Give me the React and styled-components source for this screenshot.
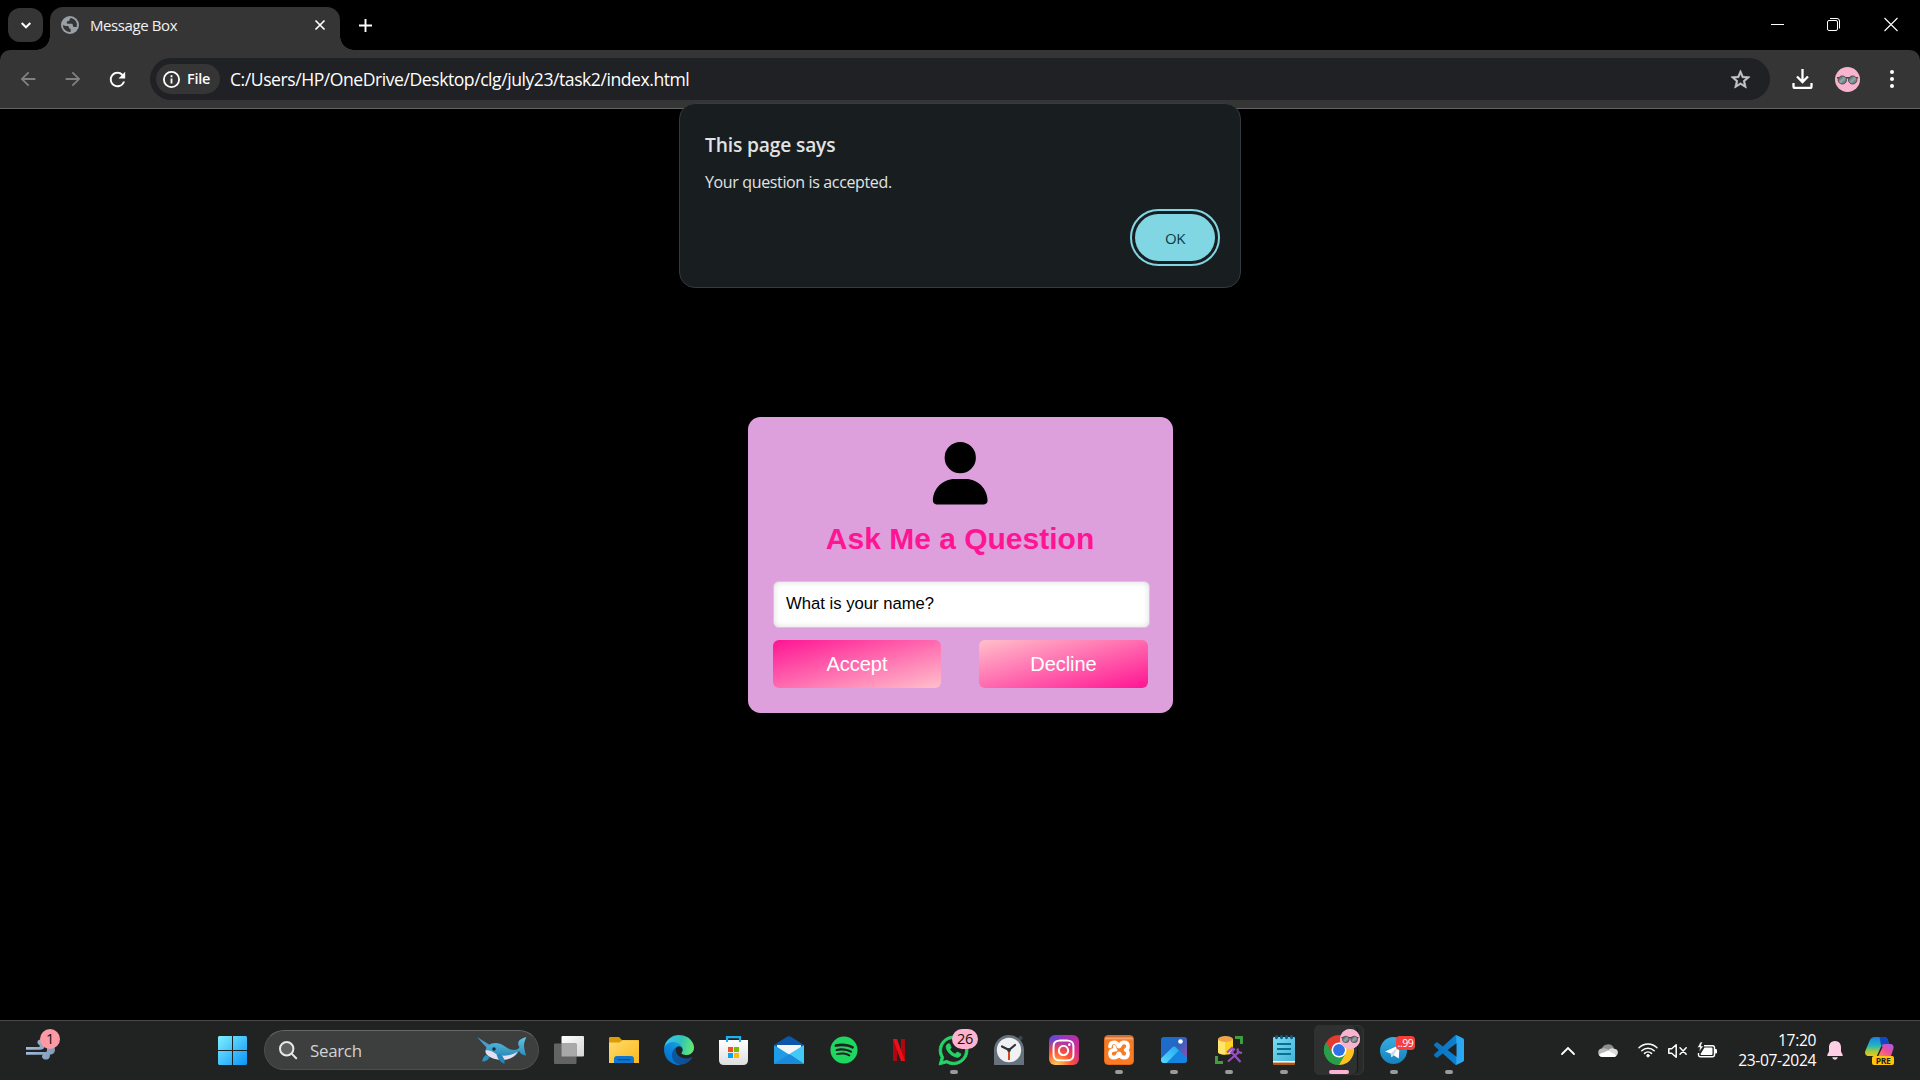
import React from "react";
import styled, { createGlobalStyle, css } from "styled-components";
import { FaSpotify, FaWhatsapp, FaInstagram } from "react-icons/fa";
import { FaUser } from "react-icons/fa6";
import { MdArrowBack, MdArrowForward, MdRefresh, MdStarOutline } from "react-icons/md";

const GlobalStyle = createGlobalStyle`
  *, *::before, *::after { box-sizing: border-box; }
  body { margin: 0; background: #000; overflow: hidden; }
  button, input { font: inherit; border: 0; padding: 0; margin: 0; background: none; color: inherit; }
`;

const ui = `"Open Sans", "Noto Sans", sans-serif`;
const arial = `"Liberation Sans", Arial, sans-serif`;

const Desktop = styled.div`
  width: 1920px;
  height: 1080px;
  display: flex;
  flex-direction: column;
  background: #000;
  color: #fff;
  font-family: ${ui};
  position: relative;
`;

const Svg = styled.svg`
  display: block;
  flex: none;
  overflow: visible;
`;

/* ---------- browser chrome ---------- */

const TabStrip = styled.header`
  height: 50px;
  padding-left: 8px;
  display: flex;
  align-items: flex-start;
`;

const TabSearch = styled.button`
  width: 35px;
  height: 34px;
  margin: 8px 7px 0 0;
  border-radius: 12px;
  background: #353535;
  display: grid;
  place-items: center;
`;

const Tab = styled.div`
  width: 290px;
  height: 43px;
  margin-top: 7px;
  padding: 0 11px 7px 11px;
  border-radius: 13px 13px 0 0;
  background: #353535;
  display: flex;
  align-items: center;
  position: relative;
  &::before,
  &::after {
    content: "";
    position: absolute;
    bottom: 0;
    width: 14px;
    height: 14px;
  }
  &::before {
    left: -14px;
    background: radial-gradient(circle at 0 0, transparent 13.5px, #353535 14px);
  }
  &::after {
    right: -14px;
    background: radial-gradient(circle at 100% 0, transparent 13.5px, #353535 14px);
  }
`;

const TabTitle = styled.span`
  flex: 1;
  margin-left: 11px;
  font-size: 15px;
  letter-spacing: -0.4px;
  line-height: 20px;
  color: #f2f2f2;
`;

const NewTab = styled.button`
  width: 36px;
  height: 36px;
  margin: 7px 0 0 7px;
  display: grid;
  place-items: center;
`;

const WindowControls = styled.div`
  margin-left: auto;
  display: flex;
`;

const WindowButton = styled.button`
  width: ${(p) => p.$w}px;
  height: 49px;
  display: grid;
  place-items: center;
`;

const Toolbar = styled.div`
  height: 59px;
  padding: 0 9px 0 5px;
  background: #353535;
  border-bottom: 1px solid #646464;
  border-radius: 10px 10px 0 0;
  display: flex;
  align-items: center;
`;

const NavButton = styled.button`
  width: 45px;
  height: 42px;
  display: grid;
  place-items: center;
  color: ${(p) => (p.$dim ? "#808080" : "#fff")};
`;

const Omnibox = styled.div`
  width: 1620px;
  height: 42px;
  margin-left: 10px;
  padding: 0 18px 0 6px;
  border-radius: 21px;
  background: #202124;
  display: flex;
  align-items: center;
`;

const SchemeChip = styled.div`
  width: 64px;
  height: 30px;
  padding-left: 7px;
  border-radius: 15px;
  background: #353535;
  display: flex;
  align-items: center;
  gap: 7px;
  font-size: 14.4px;
  line-height: 28px;
  font-weight: 600;
  letter-spacing: -0.2px;
`;

const Url = styled.span`
  flex: 1;
  margin-left: 10px;
  font-size: 17.6px;
  letter-spacing: -0.46px;
  line-height: 24px;
  white-space: nowrap;
`;

const ToolbarActions = styled.div`
  margin-left: 22px;
  display: flex;
  align-items: center;
`;

/* ---------- page ---------- */

const Viewport = styled.main`
  flex: 1;
  display: grid;
  place-items: center;
  font-family: ${arial};
`;

const Card = styled.section`
  width: 425px;
  height: 296px;
  margin: 1px 0 0 1px;
  padding: 25px;
  border-radius: 12.5px;
  background: #dda0dd;
  display: flex;
  flex-direction: column;
  color: #000;
`;

const Avatar = styled.div`
  width: 374px;
  height: 62px;
  display: flex;
  justify-content: center;
`;

const Heading = styled.h1`
  width: 374px;
  margin: 17px 0 25px;
  height: 35px;
  font-size: 30px;
  line-height: 35px;
  font-weight: 700;
  text-align: center;
  color: #ff1493;
`;

const Question = styled.input`
  width: 377px;
  height: 47px;
  padding: 0 12px 1px !important;
  border: 1px solid #ccc !important;
  border-radius: 6px;
  background: #fff !important;
  box-shadow: inset 0 0 6px rgba(0, 0, 0, 0.14);
  font-size: 16.67px !important;
  color: #000 !important;
  outline: none;
`;

const Choices = styled.div`
  margin-top: 12px;
  width: 375px;
  display: grid;
  grid-template-columns: 168px 169px;
  justify-content: space-between;
`;

const Choice = styled.button`
  height: 48px;
  border-radius: 6px;
  font-size: 20px;
  letter-spacing: -0.05px;
  color: #fff;
  background: linear-gradient(to bottom right, ${(p) => p.$from}, ${(p) => p.$to});
`;

const Dialog = styled.div`
  position: absolute;
  left: 679px;
  top: 103px;
  width: 562px;
  height: 185px;
  padding: 29px 25px 26px;
  border: 1px solid #343a3d;
  border-radius: 16px;
  background: #181d1f;
  color: #e1e3e4;
  display: flex;
  flex-direction: column;
`;

const DialogTitle = styled.h2`
  margin: 0;
  font-size: 19.2px;
  line-height: 24px;
  font-weight: 600;
  letter-spacing: -0.15px;
`;

const DialogText = styled.p`
  margin: 14px 0 0;
  font-size: 16px;
  line-height: 22px;
  letter-spacing: -0.36px;
`;

const OkButton = styled.button`
  align-self: flex-end;
  margin-top: auto;
  width: 80px;
  height: 47px;
  border-radius: 24px;
  background: #80d6e2;
  outline: 2px solid #80d6e2;
  outline-offset: 3px;
  color: #0b3b43;
  font-size: 15px;
  font-weight: 500;
  letter-spacing: -0.4px;
`;

/* ---------- taskbar ---------- */

const Taskbar = styled.footer`
  height: 60px;
  border-top: 1px solid #484848;
  background: #212222;
  display: flex;
  align-items: stretch;
`;

const Widgets = styled.div`
  width: 204px;
  padding: 5px 0 0 23px;
`;

const StartButton = styled.button`
  width: 60px;
  display: flex;
  align-items: center;
  padding-left: 14px !important;
`;

const SearchBox = styled.div`
  width: 275px;
  height: 40px;
  margin: 9px 2px 0 0;
  padding: 0 11px 0 14px;
  border: 1px solid #4d4e4e;
  border-top-color: #666;
  border-radius: 20px;
  background: #3d3e3e;
  display: flex;
  align-items: center;
`;

const SearchLabel = styled.span`
  flex: 1;
  margin-left: 13px;
  font-size: 16.9px;
  letter-spacing: -0.3px;
  color: #d2d2d2;
`;

const Pin = styled.div`
  width: 55px;
  display: grid;
  place-items: center;
  padding-bottom: 1px;
  position: relative;
  ${(p) =>
    p.$running &&
    css`
      &::after {
        content: "";
        position: absolute;
        bottom: 6px;
        left: ${p.$active ? 17.5 : 23.5}px;
        width: ${p.$active ? 20 : 8}px;
        height: 4px;
        border-radius: 2px;
        background: ${p.$active ? "#ffb1d3" : "#9a9a9a"};
      }
    `}
`;

const ActiveTile = styled.div`
  position: absolute;
  left: 3px;
  top: 4px;
  width: 50px;
  height: 50px;
  border-radius: 6px;
  border: 1px solid #343535;
  background: #292a2a;
  &::before {
    content: "";
    position: absolute;
    inset: -1px 5px -1px -1px;
    border-right: 1px solid #171717;
    border-radius: 6px;
    background: #2f3131;
  }
`;

const Layer = styled.div`
  position: relative;
`;

const WeatherLayer = styled(Layer)`
  padding: 10px 0 0 3px;
`;

const Badge = styled.span`
  position: absolute;
  left: ${(p) => p.$x}px;
  top: ${(p) => p.$y}px;
  width: ${(p) => p.$w}px;
  height: ${(p) => p.$h}px;
  border-radius: ${(p) => p.$r || 10}px;
  background: ${(p) => p.$bg};
  color: ${(p) => p.$fg};
  font-size: ${(p) => p.$fs}px;
  line-height: ${(p) => p.$h}px;
  letter-spacing: -0.4px;
  text-align: center;
`;

const InstaTile = styled.div`
  width: 30px;
  height: 30px;
  border-radius: 6px;
  display: grid;
  place-items: center;
  background: radial-gradient(circle at 25% 105%, #ffd55a 0, #ff9a45 18%, #ff5433 38%, transparent 68%),
    linear-gradient(135deg, #4a55dd 0, #a033c0 30%, #d32a8e 70%, #c030a0 100%);
`;

const XamppTile = styled.div`
  width: 30px;
  height: 30px;
  border-radius: 4px;
  border: 1px solid #e06a1a;
  display: grid;
  place-items: center;
  background: linear-gradient(#b85c28 0, #ffab70 8%, #f47a26 14%, #ff7a22 100%);
`;

const Tray = styled.div`
  margin-left: auto;
  width: 368px;
  display: flex;
  align-items: center;
`;

const TraySlot = styled.div`
  width: ${(p) => p.$w}px;
  display: grid;
  place-items: center;
`;

const Clock = styled.div`
  width: 94px;
  margin-top: -2px;
  text-align: right;
  font-size: 15.6px;
  line-height: 20px;
  letter-spacing: -0.36px;
  color: #fff;
`;

/* ---------- drawings ---------- */

const Shades = ({ size, id }) => (
  <Svg width={size} height={size} viewBox="0 0 26 26">
    <defs>
      <linearGradient id={id} x1="0" y1="0" x2="1" y2="1">
        <stop offset="0" stopColor="#2e4148" />
        <stop offset=".5" stopColor="#8faaa9" />
        <stop offset="1" stopColor="#46565e" />
      </linearGradient>
    </defs>
    <circle cx="13" cy="13" r="13" fill="#f8b4cf" />
    <path d="M2 11.2h22M10.800 12q2.200-1.600 4.400 0" stroke="#4a4448" strokeWidth="1.500" fill="none" />
    <ellipse cx="7.600" cy="13.500" rx="4.400" ry="4.200" fill={`url(#${id})`} stroke="#554b50" />
    <ellipse cx="18.400" cy="13.500" rx="4.400" ry="4.200" fill={`url(#${id})`} stroke="#554b50" />
  </Svg>
);

const Globe = () => (
  <Svg width="18" height="18" viewBox="0 0 18 18">
    <circle cx="9" cy="9" r="9" fill="#9aa0a8" />
    <path
      d="M10.300 1.900c-1.200.3-1.800 1-1.800 2.100 0 .8-.5 1.200-1.500 1.200-.9 0-1.300.5-1.300 1.300 0 .9.600 1.300 1.700 1.300h2.900c1.100 0 1.600.6 1.600 1.700s.7 1.500 1.700 1.500h2.100a7.200 7.200 0 0 0-5.400-9.100zM1.900 8.500c.8 1 1.600 1.400 2.900 1.400h1.500c1.100 0 1.700.6 1.700 1.600 0 .9.500 1.300 1.300 1.300.3 0 .4.4.4 1.100v2.100A7.100 7.100 0 0 1 1.900 8.500z"
      fill="#353535"
    />
  </Svg>
);

const WeatherWind = () => (
  <Svg width="30" height="24" viewBox="0 0 30 24">
    <defs>
      <linearGradient id="wind" x1="0" y1="0" x2="30" y2="0" gradientUnits="userSpaceOnUse">
        <stop offset="0" stopColor="#a3b9dc" />
        <stop offset="1" stopColor="#7f9cb5" />
      </linearGradient>
    </defs>
    <g fill="url(#wind)">
      <path d="M0 11h12c1.800 0 2.300-.9 1.500-1.800C10 7 11.500 3.500 14.500 3.500c3.500 0 5.500 3 4.800 6-.6 2.700-2.600 4.300-5.300 4.300H0z" />
      <path d="M0 16h19c1.300 0 2-.5 2-1.500V11.500c1-2.500 8-2 8 2 0 3-2 5-5 5 0 3-1 5-4 5-4 0-5-3.700-3-4.800H0z" />
    </g>
  </Svg>
);

const WindowsLogo = () => (
  <Svg width="29" height="29" viewBox="0 0 29 29">
    <defs>
      <linearGradient id="win" x1="0" y1="0" x2="29" y2="29" gradientUnits="userSpaceOnUse">
        <stop offset="0" stopColor="#7ff0ff" />
        <stop offset="1" stopColor="#0a94f8" />
      </linearGradient>
    </defs>
    <path d="M1 0h13v14H0V1zM15 0h13l1 1v13H15zM0 15h14v14H1l-1-1zM15 15h14v13l-1 1H15z" fill="url(#win)" />
  </Svg>
);

const Magnifier = () => (
  <Svg width="18" height="18" viewBox="0 0 18 18" fill="#5f6161" stroke="#e8e8e8" strokeWidth="2">
    <circle cx="7.700" cy="7.700" r="6.700" />
    <path d="M12.600 12.600l4.600 4.600" strokeLinecap="round" />
  </Svg>
);

const Narwhal = () => (
  <Svg width="50" height="28" viewBox="0 -1 50 28">
    <defs>
      <linearGradient id="nar" x1="0" y1="0" x2="0" y2="1">
        <stop offset="0" stopColor="#62c4e6" />
        <stop offset="1" stopColor="#2182b0" />
      </linearGradient>
    </defs>
    <path d="M0 0l12.500 7.800-2.400 3.400z" fill="#4c9cc6" />
    <path d="M9 18c-2 1-3.500 3.500-3.800 6.500 3.300.3 6.300-1.500 7.300-4.500z" fill="#2a93c2" />
    <path
      d="M8.500 14C9 9 13 6 18.500 6c8.500 0 11 7 18.500 7 2.800 0 4.500-1.300 5.600-3-2-2-1.800-5 .2-7C44.500 1.500 47 .6 49.300 0c-.9 3-2.300 5-2.300 8.500 0 3.200 1.400 6.500 2 10-3.700-.4-6.200-2-7-4.700C39.500 19 35 22.500 26 22.500 16 22.500 8 19 8.500 14z"
      fill="url(#nar)"
    />
    <path d="M8.500 13.500c2.500-.8 6 .2 9 2.400 4 2.800 9 3.400 15 2.100 3-.7 5.500-1.600 8-3.200C37.500 20 33 22.800 26 22.800 16 22.800 8 19 8.500 13.500z" fill="#e5def1" />
    <path d="M19.500 17c1 4.500 3.500 8.500 8 9.800.5-3.500-.8-7-3.800-9.600z" fill="#2387b8" />
    <circle cx="17" cy="12" r="1.700" fill="#14293c" />
  </Svg>
);

const TaskView = () => (
  <Svg width="30" height="28" viewBox="0 0 30 28">
    <defs>
      <linearGradient id="tv" x1="0" y1="0" x2="1" y2="1">
        <stop offset="0" stopColor="#fff" />
        <stop offset="1" stopColor="#d4d4d4" />
      </linearGradient>
    </defs>
    <rect x="7.500" y="0" width="22.500" height="20.500" rx="1" fill="url(#tv)" />
    <rect x="0" y="7.500" width="22.500" height="20.500" rx="1" fill="#636363" />
    <path d="M7.500 7.500h15v13h-15z" fill="#a9a9a9" />
  </Svg>
);

const Folder = () => (
  <Svg width="30" height="26" viewBox="0 0 30 26">
    <defs>
      <linearGradient id="fo" x1="0" y1="0" x2="1" y2="1">
        <stop offset="0" stopColor="#ffdc6e" />
        <stop offset="1" stopColor="#fbb71c" />
      </linearGradient>
    </defs>
    <path d="M0 1q0-1 1-1h9l3 3h16q1 0 1 1v6H0z" fill="#dd9c05" />
    <path d="M0 5.500h10.500l3-2.200H29q1 0 1 1V26H0z" fill="url(#fo)" />
    <path d="M5 26v-4q0-3 3-3h14q3 0 3 3v4z" fill="#0f75cd" />
    <path d="M9 22.700h12" stroke="#0a4f98" strokeWidth="1.300" strokeLinecap="round" />
  </Svg>
);

const Edge = () => (
  <Svg width="30" height="30" viewBox="0 0 256 256">
    <defs>
      <linearGradient id="e1" x1="63" y1="175" x2="241" y2="175" gradientUnits="userSpaceOnUse">
        <stop offset="0" stopColor="#0c59a4" />
        <stop offset="1" stopColor="#114a8b" />
      </linearGradient>
      <linearGradient id="e2" x1="157" y1="100" x2="46" y2="221" gradientUnits="userSpaceOnUse">
        <stop offset="0" stopColor="#1b9de2" />
        <stop offset=".6" stopColor="#0883d9" />
        <stop offset="1" stopColor="#0573ce" />
      </linearGradient>
      <linearGradient id="e3" x1="20" y1="60" x2="250" y2="120" gradientUnits="userSpaceOnUse">
        <stop offset="0" stopColor="#35c1f1" />
        <stop offset=".5" stopColor="#2fc4b8" />
        <stop offset="1" stopColor="#66eb6e" />
      </linearGradient>
    </defs>
    <path fill="url(#e1)" d="M235.680 188.460a93.730 93.730 0 0 1-10.540 4.710 101.870 101.870 0 0 1-35.900 6.460c-47.320 0-88.540-32.550-88.540-74.320A31.480 31.480 0 0 1 117.130 97.900c-42.800 1.800-53.800 46.400-53.800 72.530 0 73.880 68.090 81.370 82.760 81.370 7.910 0 19.840-2.300 27-4.560l1.310-.44a128.340 128.340 0 0 0 66.600-52.800 4 4 0 0 0-5.320-5.540z" />
    <path fill="url(#e2)" d="M105.730 241.420a79.200 79.200 0 0 1-22.740-21.340 80.720 80.720 0 0 1 29.530-120c3.120-1.470 8.450-4.130 15.540-4a32.350 32.350 0 0 1 25.690 13 31.880 31.880 0 0 1 6.360 18.660c0-.21 24.460-79.600-80-79.600-43.900 0-80 41.660-80 78.210a130.150 130.150 0 0 0 12.110 56 128 128 0 0 0 156.380 67.110 75.550 75.550 0 0 1-62.780-8z" />
    <path fill="url(#e3)" d="M152.330 148.860c-.81 1.050-3.300 2.500-3.300 5.660 0 2.610 1.700 5.120 4.720 7.230 14.380 10 41.490 8.680 41.560 8.680a59.560 59.560 0 0 0 30.270-8.350 61.380 61.380 0 0 0 30.430-52.880c.26-22.410-8-37.310-11.340-43.910C223.460 23.840 177.720 0 128 0A128 128 0 0 0 0 126.200c.48-36.540 36.800-66.050 80-66.050 3.500 0 23.460.34 42 10.070 16.340 8.580 24.900 18.940 30.850 29.210 6.180 10.670 7.280 24.150 7.280 29.520s-2.740 13.330-7.800 19.910z" />
  </Svg>
);

const Store = () => (
  <Svg width="29" height="29" viewBox="0 0 29 29">
    <defs>
      <linearGradient id="st" x1="0" y1="0" x2="0" y2="1">
        <stop offset="0" stopColor="#fff" />
        <stop offset="1" stopColor="#dedede" />
      </linearGradient>
    </defs>
    <path d="M0 4h29v20q0 5-5 5H5q-5 0-5-5z" fill="url(#st)" />
    <path d="M8 6V1.200h13V6" fill="none" stroke="#1fb0ea" strokeWidth="2.200" />
    <path d="M9 11h5v5H9z" fill="#f25022" />
    <path d="M15 11h5v5h-5z" fill="#7fba00" />
    <path d="M9 17h5v5H9z" fill="#00a4ef" />
    <path d="M15 17h5v5h-5z" fill="#ffb900" />
  </Svg>
);

const Mail = () => (
  <Svg width="30" height="28" viewBox="0 0 30 28">
    <path d="M0 9L13.500.6q1.500-.9 3 0L30 9l-10 8H10z" fill="#0b56a8" />
    <path d="M3 9h24v10H3z" fill="#f4f4f4" />
    <path d="M0 9l30 19H0z" fill="#1f9be8" />
    <path d="M15 18.200L30 28V9z" fill="#43c9f6" />
    <path d="M15 18L30 28H0z" fill="#198bdc" />
  </Svg>
);

const Netflix = () => (
  <Svg width="12" height="22" viewBox="0 0 12 22">
    <rect x="0" y="0" width="4" height="22" fill="#b1060f" />
    <rect x="8" y="0" width="4" height="22" fill="#b1060f" />
    <path d="M0 0h4l8 22H8z" fill="#ec0f18" />
  </Svg>
);

const ClockApp = () => (
  <Svg width="30" height="30" viewBox="0 0 30 30">
    <path d="M24 3l2.500-2.500L29 3l-2.500 3z" fill="#3f464b" />
    <path d="M0 15A15 15 0 0 1 30 15v14.500q0 .5-.5.500H.5q-.5 0-.5-.5z" fill="#66737f" />
    <circle cx="15" cy="15" r="12.200" fill="#f0f1f2" />
    <path d="M8 11.500l7 3.500 6-5" fill="none" stroke="#2b3238" strokeWidth="2.200" strokeLinecap="round" />
    <path d="M15 15.500V25" stroke="#d83b10" strokeWidth="1.900" />
    <circle cx="15" cy="15" r="1.900" fill="#2b3238" />
  </Svg>
);

const Xampp = () => (
  <Svg width="24" height="20" viewBox="0 0 24 20" fill="none" stroke="#fff" strokeWidth="3.700" strokeLinecap="round" strokeLinejoin="round">
    <path d="M3 6.500C3 3.700 4.600 2.300 7 2.300c2.300 0 3.500 1.200 4 3.200.4 1.500 1.600 1.500 2 0 .5-2 1.700-3.200 4-3.200 2.400 0 4 1.400 4 4 0 2-1 3.200-2.400 3.700C20.200 10.500 21 12 21 13.500c0 2.600-1.600 4.200-4 4.200-2.300 0-3.500-1.200-4-3.200-.4-1.500-1.600-1.500-2 0-.5 2-1.700 3.200-4 3.200-2.400 0-4-1.600-4-4.200 0-2 1.200-3.300 3.500-3.500" />
    <path d="M6.500 10H9M7.300 6.500l1 2.500" strokeWidth="3" />
  </Svg>
);

const Photos = () => (
  <Svg width="26" height="26" viewBox="0 0 26 26">
    <defs>
      <linearGradient id="ph" x1="0" y1="0" x2="1" y2=".7">
        <stop offset="0" stopColor="#1173d2" />
        <stop offset=".6" stopColor="#2c63c0" />
        <stop offset="1" stopColor="#8a4fb0" />
      </linearGradient>
      <linearGradient id="ph2" x1="0" y1="1" x2="1" y2="0">
        <stop offset="0" stopColor="#55dcff" />
        <stop offset="1" stopColor="#27a6f0" />
      </linearGradient>
      <clipPath id="phc">
        <rect width="26" height="26" rx="3" />
      </clipPath>
    </defs>
    <g clipPath="url(#phc)">
      <rect width="26" height="26" fill="url(#ph)" />
      <path d="M13 9.300q1.500 0 2.600 1.100L28 22.500V26H2z" fill="#1583e0" />
      <path d="M0 21.500L11.200 10.400q1.800-1.600 3.600 0l3 3L5.500 26H0z" fill="url(#ph2)" />
    </g>
    <circle cx="19.500" cy="4.500" r="2.300" fill="#fff" />
  </Svg>
);

const DbTool = () => (
  <Svg width="28" height="28" viewBox="0 0 28 28">
    <path d="M20 1.500h6.500V8M1.500 20v6.500H8" fill="none" stroke="#3f9c3f" strokeWidth="3" />
    <path d="M3 3v13c0 3.500 15 3.500 15 0V3z" fill="#ffd41f" />
    <path d="M3 3v13c0 1.500 3 2.500 7 2.600V3z" fill="#ffe56e" />
    <ellipse cx="10.500" cy="3" rx="7.500" ry="3" fill="#f0a54a" />
    <g fill="none" stroke="#9a4fc0" strokeWidth="2.200">
      <path d="M16.500 16L25.500 26M13 25.500L24.500 15.500" />
      <path d="M12 16.500l5-4.500 2 1.500-3.500 4M22.500 12.500l.5 3.500 4 1" />
    </g>
  </Svg>
);

const Notepad = () => (
  <Svg width="22" height="30" viewBox="0 0 22 30">
    <defs>
      <linearGradient id="np" x1="0" y1="0" x2="1" y2="1">
        <stop offset="0" stopColor="#7bdcf2" />
        <stop offset="1" stopColor="#43b3d8" />
      </linearGradient>
    </defs>
    <path d="M0 26h22v3q0 1-1 1H1q-1 0-1-1z" fill="#b2560f" />
    <path d="M0 25h22v2.600H0z" fill="#f3f3f3" />
    <path d="M0 3q0-1 1-1h20q1 0 1 1v23H0z" fill="url(#np)" />
    <path d="M4 9h14M4 14h14M4 19h14" stroke="#0b6e94" strokeWidth="1.800" />
    <g fill="#0c5b80">
      {[3.5, 8.5, 13.5, 18.5].map((x) => (
        <rect key={x} x={x - 1.4} y="0" width="2.800" height="4.200" rx="1.400" />
      ))}
    </g>
  </Svg>
);

const Chrome = () => (
  <Svg width="30" height="30" viewBox="0 0 48 48">
    <path d="M24 24L3.200 12A24 24 0 0 1 44.800 12z" fill="#e33b2e" />
    <path d="M24 24L44.800 12A24 24 0 0 1 24 48z" fill="#fcc31e" />
    <path d="M24 24V48A24 24 0 0 1 3.200 12z" fill="#2a9d4a" />
    <path d="M24 12h20.800l-10.400 18z" fill="#fcc31e" />
    <path d="M13.600 30L3.200 12 24 12z" fill="#e33b2e" />
    <path d="M3.200 12L13.600 30 24 36 34.400 30 24 48A24 24 0 0 1 3.200 12z" fill="#2a9d4a" />
    <circle cx="24" cy="24" r="12" fill="#fff" />
    <circle cx="24" cy="24" r="9.500" fill="#2f72e8" />
  </Svg>
);

const Telegram = () => (
  <Svg width="27" height="27" viewBox="0 0 27 27">
    <defs>
      <linearGradient id="tg" x1="0" y1="0" x2="0" y2="1">
        <stop offset="0" stopColor="#35aee2" />
        <stop offset="1" stopColor="#1680bd" />
      </linearGradient>
    </defs>
    <circle cx="13.500" cy="13.500" r="13.500" fill="url(#tg)" />
    <path d="M5 14.500L19.500 8l-.7 13.500-5.300-3.300-2 2-.9-3.800z" fill="#fff" />
    <path d="M10.600 16.400l7.900-6.900-5 8.700-2 2z" fill="#c5dcec" />
  </Svg>
);

const VsCode = () => (
  <Svg width="30" height="30" viewBox="0 0 24 24">
    <defs>
      <linearGradient id="vs" x1="0" y1="0" x2="1" y2="0">
        <stop offset="0" stopColor="#0a73bd" />
        <stop offset=".72" stopColor="#0d80d0" />
        <stop offset=".76" stopColor="#28a6f2" />
        <stop offset="1" stopColor="#2ca9f5" />
      </linearGradient>
    </defs>
    <path
      fill="url(#vs)"
      d="M23.150 2.587L18.210.21a1.494 1.494 0 0 0-1.705.29l-9.460 8.630-4.120-3.128a.999.999 0 0 0-1.276.057L.327 7.261A1 1 0 0 0 .326 8.740L3.899 12 .326 15.260a1 1 0 0 0 .001 1.479L1.650 17.940a.999.999 0 0 0 1.276.057l4.120-3.128 9.460 8.630a1.492 1.492 0 0 0 1.704.29l4.942-2.377A1.500 1.500 0 0 0 24 20.060V3.939a1.500 1.500 0 0 0-.85-1.352zm-5.146 14.861L10.826 12l7.178-5.448v10.896z"
    />
  </Svg>
);

const Cloud = () => (
  <Svg width="20" height="13" viewBox="0 0 20 13">
    <path d="M3.500 6A6.500 6.500 0 0 1 16 4.500l-6 4.500z" fill="#8d8d8d" />
    <path d="M4.500 4.500c2.500-.7 4 .2 6 1.500l4 2.500L4 12.500A4 4 0 0 1 4.500 4.500z" fill="#b9b9b9" />
    <path d="M10 6.500c2-2.500 5-2.800 7-1.500 3 .5 3.800 4 2 6l-6-1z" fill="#dcdcdc" />
    <path d="M1 11c1.500-2 4-2.300 6-3l3-1.500 8.800 4.700A3.500 3.500 0 0 1 16.500 13H4q-2 0-3-2z" fill="#fff" />
  </Svg>
);

const Wifi = () => (
  <Svg width="20" height="15" viewBox="0 .5 20 15" fill="none" stroke="#fff" strokeWidth="1.500" strokeLinecap="round">
    <path d="M1 5.300a12.700 12.700 0 0 1 18 0M3.800 8.200a8.800 8.800 0 0 1 12.400 0M6.500 10.900a5 5 0 0 1 7 0" />
    <circle cx="10" cy="13.200" r="1.300" fill="#fff" strokeWidth=".8" />
  </Svg>
);

const Muted = () => (
  <Svg width="19" height="14" viewBox="1 0 19 14" fill="none" stroke="#fff" strokeWidth="1.500" strokeLinejoin="round">
    <path d="M.8 4.700h2.900L8.200.8v12.400L3.700 9.300H.8z" />
    <path d="M12 3.800l6.200 6.400M18.200 3.800L12 10.200" strokeLinecap="round" />
  </Svg>
);

const Battery = () => (
  <Svg width="20" height="16" viewBox="0 1 20 16">
    <path d="M7 3.700h8.500q2 0 2 2v7q0 2-2 2h-12q-2 0-2-2V11" fill="none" stroke="#fff" strokeWidth="1.400" />
    <path d="M7.500 5.500h7q1 0 1 1V12q0 1-1 1h-10q-1 0-1-1z" fill="#fff" />
    <path d="M18 7h.8q1.200 0 1.200 1.200v2q0 1.200-1.200 1.200H18z" fill="#fff" />
    <path d="M3.500 0L.5 5.500H3L2 10l4.500-6H4L5.500 0z" fill="#fff" stroke="#212222" strokeWidth=".5" />
  </Svg>
);

const Bell = () => (
  <Svg width="16" height="19" viewBox="0 0 16 19" fill="#ffd0e5">
    <path d="M8 0c3.800 0 6 2.800 6 6.300v4.200l1.800 3.500q.3 1-.8 1H1q-1.100 0-.8-1L2 10.500V6.300C2 2.800 4.200 0 8 0z" />
    <path d="M5.200 16.300h5.600c-.4 1.600-1.400 2.500-2.800 2.500s-2.400-.9-2.800-2.500z" />
  </Svg>
);

const Copilot = () => (
  <Svg width="30" height="28" viewBox="0 0 30 28">
    <defs>
      <linearGradient id="cp1" x1="0" y1="0" x2="0" y2="1">
        <stop offset="0" stopColor="#1d7fe0" />
        <stop offset=".45" stopColor="#21b5c0" />
        <stop offset=".75" stopColor="#9fc93f" />
        <stop offset="1" stopColor="#f2c517" />
      </linearGradient>
      <linearGradient id="cp2" x1="0" y1="1" x2="1" y2="0">
        <stop offset="0" stopColor="#ff8a4a" />
        <stop offset=".5" stopColor="#ea4e9c" />
        <stop offset="1" stopColor="#a45cf2" />
      </linearGradient>
    </defs>
    <path d="M10 0h9c2.500 0 3.500 1.500 4 3.500l1 3.500h-4c-2.500 0-3.500 1.500-4 3.500L13 19H4c-3 0-4.500-2-3.700-5L4.500 4C5.500 1.500 7 0 10 0z" fill="url(#cp1)" />
    <path d="M14.500 0H19c2.500 0 3.500 1.500 4 3.500l1 3.500h-4c-2 0-3 .8-3.800 2.500z" fill="#1247c4" />
    <path d="M20 7h5c3 0 4 2 3.300 5L26 19H12.500l3.500-9c.8-2 2-3 4-3z" fill="url(#cp2)" />
    <path d="M17 9.500l-4.500 9.500" stroke="#222" strokeWidth="1.500" />
  </Svg>
);

const pins = [
  { icon: <TaskView /> },
  { icon: <Folder /> },
  { icon: <Edge /> },
  { icon: <Store /> },
  { icon: <Mail /> },
  { icon: <FaSpotify size={28} color="#1ed760" /> },
  { icon: <Netflix /> },
  {
    running: true,
    icon: (
      <Layer>
        <FaWhatsapp size={33} color="#25d366" stroke="#25d366" strokeWidth={14} display="block" />
        <Badge $x={15} $y={-5} $w={26} $h={20} $bg="#ffb3d1" $fg="#111" $fs={14.5}>26</Badge>
      </Layer>
    ),
  },
  { icon: <ClockApp /> },
  { icon: <InstaTile><FaInstagram size={25} color="#fff" /></InstaTile> },
  { running: true, icon: <XamppTile><Xampp /></XamppTile> },
  { running: true, icon: <Photos /> },
  { running: true, icon: <DbTool /> },
  { running: true, icon: <Notepad /> },
  {
    running: true,
    active: true,
    icon: (
      <Layer>
        <Chrome />
        <Badge $x={16} $y={-6} $w={20} $h={20} $bg="#f8b4cf"><Shades size={20} id="lensSmall" /></Badge>
      </Layer>
    ),
  },
  {
    running: true,
    icon: (
      <Layer>
        <Telegram />
        <Badge $x={16} $y={-1} $w={19} $h={14} $r={4} $bg="#f4403c" $fg="#fff" $fs={10.5}>..99</Badge>
      </Layer>
    ),
  },
  { running: true, icon: <VsCode /> },
];

export default function App() {
  return (
    <Desktop>
      <GlobalStyle />
      <TabStrip>
        <TabSearch>
          <Svg width="10" height="7" viewBox="0 0 10 7" fill="none" stroke="#fff" strokeWidth="2">
            <path d="M.7 1L5 5.300 9.300 1" />
          </Svg>
        </TabSearch>
        <Tab>
          <Globe />
          <TabTitle>Message Box</TabTitle>
          <Svg width="18" height="18" viewBox="0 0 18 18" stroke="#fff" strokeWidth="1.700">
            <path d="M4.500 4.500l9 9M13.500 4.500l-9 9" />
          </Svg>
        </Tab>
        <NewTab>
          <Svg width="13" height="13" viewBox="0 0 13 13" stroke="#fff" strokeWidth="1.900">
            <path d="M6.500 0v13M0 6.500h13" />
          </Svg>
        </NewTab>
        <WindowControls>
          <WindowButton $w={57}>
            <Svg width="13" height="13" viewBox="0 0 13 13" stroke="#fff">
              <path d="M0 6.500h13" />
            </Svg>
          </WindowButton>
          <WindowButton $w={55}>
            <Svg width="13" height="13" viewBox="0 0 13 13" fill="none" stroke="#fff">
              <rect x=".5" y="2.500" width="10" height="10" rx="1.500" />
              <path d="M3 .5h7q2.500 0 2.500 2.500v7.500" />
            </Svg>
          </WindowButton>
          <WindowButton $w={59}>
            <Svg width="13" height="13" viewBox="-.5 0 13 13" stroke="#fff" strokeWidth="1.100">
              <path d="M0 0l13 13M13 0L0 13" />
            </Svg>
          </WindowButton>
        </WindowControls>
      </TabStrip>

      <Toolbar>
        <NavButton $dim><MdArrowBack size={22} /></NavButton>
        <NavButton $dim><MdArrowForward size={22} /></NavButton>
        <NavButton><MdRefresh size={23} /></NavButton>
        <Omnibox>
          <SchemeChip>
            <Svg width="17" height="17" viewBox="0 0 17 17" fill="none" stroke="#fff" strokeWidth="1.800">
              <circle cx="8.500" cy="8.500" r="7.600" />
              <path d="M8.500 7.500v5M8.500 4.300v1.900" />
            </Svg>
            File
          </SchemeChip>
          <Url>C:/Users/HP/OneDrive/Desktop/clg/july23/task2/index.html</Url>
          <MdStarOutline size={23} color="#c7c7c7" stroke="#c7c7c7" strokeWidth={0.6} />
        </Omnibox>
        <ToolbarActions>
          <TraySlot $w={21}>
            <Svg width="20" height="20" viewBox=".5 0 20 20" fill="none" stroke="#fff" strokeWidth="2.300">
              <path d="M10 0v12.500M4.500 7.500L10 13l5.500-5.500M1 14v3.500q0 1.400 1.400 1.400h15.200q1.400 0 1.400-1.400V14" />
            </Svg>
          </TraySlot>
          <TraySlot $w={69}><Shades size={25} id="lens" /></TraySlot>
          <TraySlot $w={20}>
            <Svg width="4" height="18" viewBox="0 0 4 18" fill="#fff">
              <circle cx="2" cy="2" r="2" />
              <circle cx="2" cy="9" r="2" />
              <circle cx="2" cy="16" r="2" />
            </Svg>
          </TraySlot>
        </ToolbarActions>
      </Toolbar>

      <Viewport>
        <Card>
          <Avatar><FaUser size={62.5} /></Avatar>
          <Heading>Ask Me a Question</Heading>
          <Question defaultValue="What is your name?" />
          <Choices>
            <Choice $from="#ff1493" $to="#ffc0cb">Accept</Choice>
            <Choice $from="#ffc0cb" $to="#ff1493">Decline</Choice>
          </Choices>
        </Card>
      </Viewport>

      <Taskbar>
        <Widgets>
          <WeatherLayer>
            <WeatherWind />
            <Badge $x={17} $y={3} $w={20} $h={20} $bg="#ff99a4" $fg="#111" $fs={14.5}>1</Badge>
          </WeatherLayer>
        </Widgets>
        <StartButton><WindowsLogo /></StartButton>
        <SearchBox>
          <Magnifier />
          <SearchLabel>Search</SearchLabel>
          <Narwhal />
        </SearchBox>
        {pins.map((pin, i) => (
          <Pin key={i} $running={pin.running} $active={pin.active}>
            {pin.active && <ActiveTile />}
            {pin.icon}
          </Pin>
        ))}
        <Tray>
          <TraySlot $w={32}>
            <Svg width="14" height="8" viewBox="0 0 14 8" fill="none" stroke="#fff" strokeWidth="1.800" strokeLinecap="round">
              <path d="M1 7l6-6 6 6" />
            </Svg>
          </TraySlot>
          <TraySlot $w={48}><Cloud /></TraySlot>
          <TraySlot $w={32}><Wifi /></TraySlot>
          <TraySlot $w={28}><Muted /></TraySlot>
          <TraySlot $w={30}><Battery /></TraySlot>
          <Clock>
            <div>17:20</div>
            <div>23-07-2024</div>
          </Clock>
          <TraySlot $w={38}><Bell /></TraySlot>
          <TraySlot $w={52}>
            <Layer>
              <Copilot />
              <Badge $x={7} $y={19} $w={22} $h={9} $r={2} $bg="#ffc60b" $fg="#222" $fs={8.5}><b>PRE</b></Badge>
            </Layer>
          </TraySlot>
        </Tray>
      </Taskbar>

      <Dialog role="alertdialog">
        <DialogTitle>This page says</DialogTitle>
        <DialogText>Your question is accepted.</DialogText>
        <OkButton>OK</OkButton>
      </Dialog>
    </Desktop>
  );
}
